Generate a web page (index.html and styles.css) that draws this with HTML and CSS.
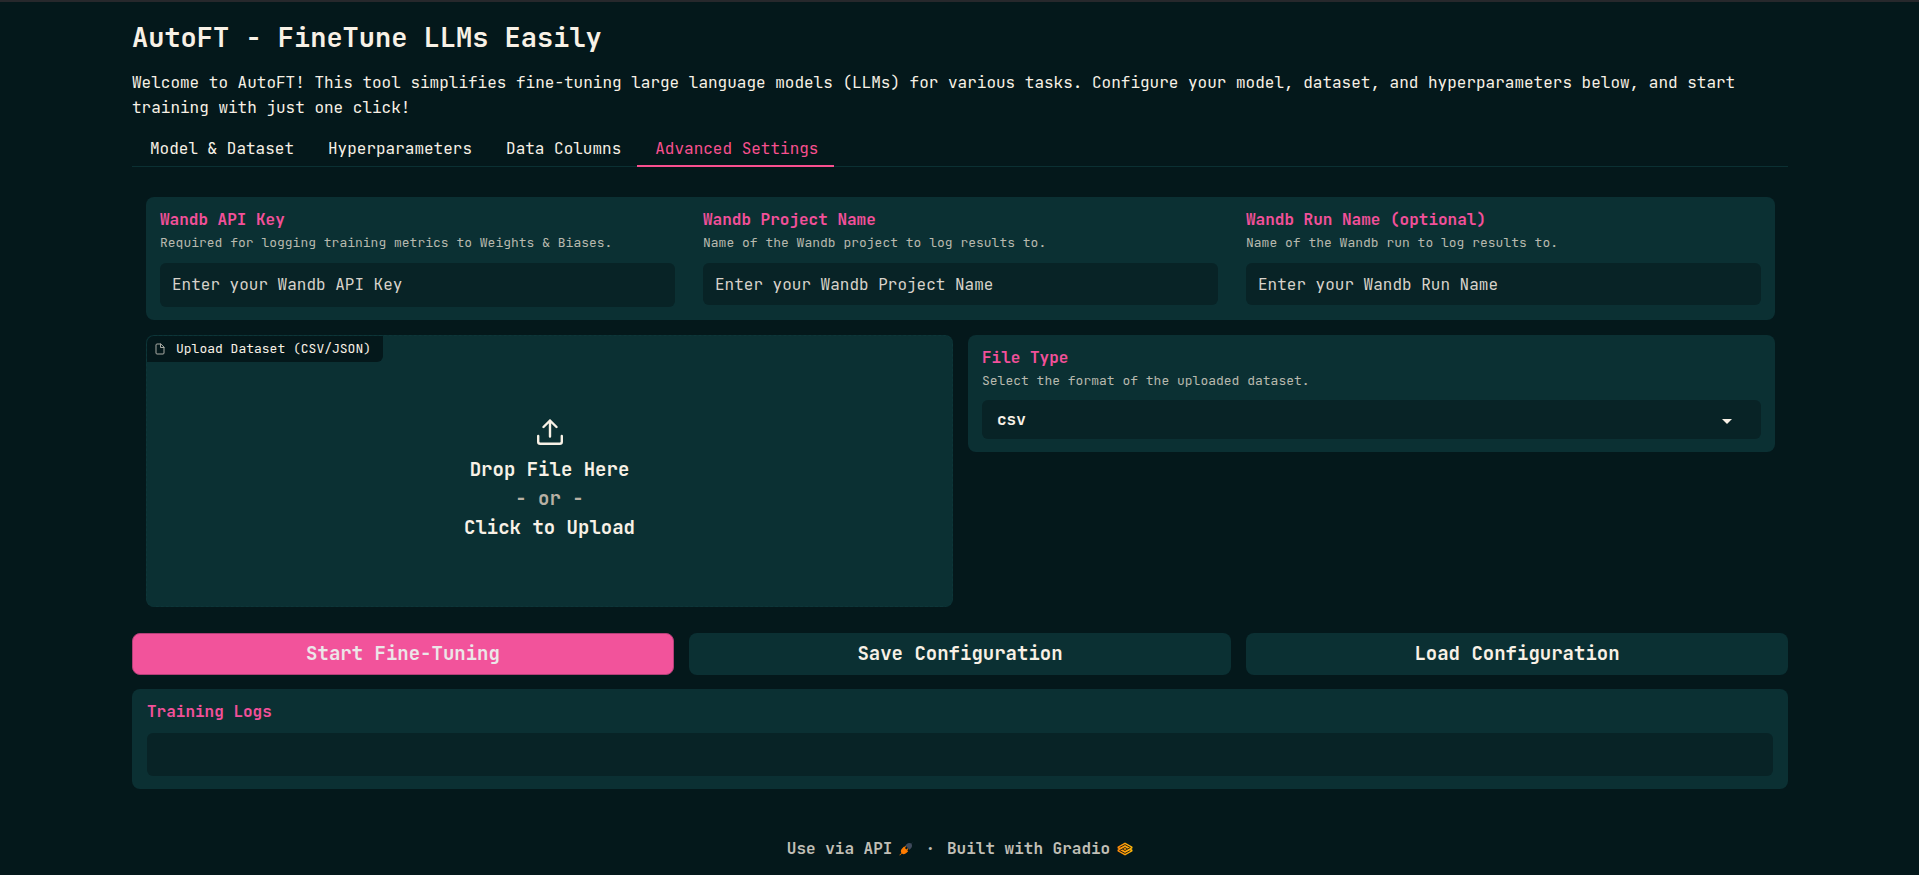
FILE: index.html
```html
<!DOCTYPE html>
<html lang="en">
<head>
<meta charset="utf-8">
<meta name="viewport" content="width=device-width, initial-scale=1">
<title>AutoFT - FineTune LLMs Easily</title>
<link rel="stylesheet" href="styles.css">
</head>
<body>
<main class="app">
  <h1 class="title">AutoFT - FineTune LLMs Easily</h1>
  <p class="intro">Welcome to AutoFT! This tool simplifies fine-tuning large language models (LLMs) for various tasks. Configure your model, dataset, and hyperparameters below, and start training with just one click!</p>

  <div class="tabs" role="tablist">
    <button class="tab" type="button" role="tab" aria-selected="false">Model &amp; Dataset</button>
    <button class="tab" type="button" role="tab" aria-selected="false">Hyperparameters</button>
    <button class="tab" type="button" role="tab" aria-selected="false">Data Columns</button>
    <button class="tab tab-active" type="button" role="tab" aria-selected="true">Advanced Settings</button>
  </div>

  <section class="tab-panel" role="tabpanel">
    <div class="block fields">
      <div class="field">
        <label class="label" for="api-key">Wandb API Key</label>
        <span class="info">Required for logging training metrics to Weights &amp; Biases.</span>
        <input class="input input-password" id="api-key" type="password" placeholder="Enter your Wandb API Key">
      </div>
      <div class="field">
        <label class="label" for="project">Wandb Project Name</label>
        <span class="info">Name of the Wandb project to log results to.</span>
        <input class="input" id="project" type="text" placeholder="Enter your Wandb Project Name">
      </div>
      <div class="field">
        <label class="label" for="run-name">Wandb Run Name (optional)</label>
        <span class="info">Name of the Wandb run to log results to.</span>
        <input class="input" id="run-name" type="text" placeholder="Enter your Wandb Run Name">
      </div>
    </div>

    <div class="columns">
      <div class="block upload">
        <div class="upload-tag">
          <svg class="file-icon" viewBox="0 0 24 24" fill="none" stroke="currentColor" stroke-width="2" stroke-linecap="round" stroke-linejoin="round" aria-hidden="true"><path d="M13 2H6a2 2 0 0 0-2 2v16a2 2 0 0 0 2 2h12a2 2 0 0 0 2-2V9z"/><path d="M13 2v7h7"/></svg>
          <span>Upload Dataset (CSV/JSON)</span>
        </div>
        <button class="drop" type="button">
          <svg class="upload-icon" viewBox="0 0 26 26" fill="none" stroke="currentColor" stroke-width="2.400" stroke-linecap="round" stroke-linejoin="round" aria-hidden="true"><path d="M13 17.500V1.500M6.500 8 13 1.500 19.500 8M1.200 17v5.800a2 2 0 0 0 2 2h19.600a2 2 0 0 0 2-2V17"/></svg>
          <span>Drop File Here</span>
          <span class="drop-or">- or -</span>
          <span>Click to Upload</span>
        </button>
      </div>
      <div class="block file-type">
        <div class="field">
          <label class="label" for="file-type">File Type</label>
          <span class="info">Select the format of the uploaded dataset.</span>
          <div class="select-wrap">
            <select class="select" id="file-type"><option>csv</option><option>json</option></select>
            <svg class="caret" viewBox="0 0 10 5" fill="currentColor" aria-hidden="true"><path d="M0 0h10L5 5z"/></svg>
          </div>
        </div>
      </div>
    </div>
  </section>

  <div class="actions">
    <button class="button button-primary" type="button">Start Fine-Tuning</button>
    <button class="button" type="button">Save Configuration</button>
    <button class="button" type="button">Load Configuration</button>
  </div>

  <section class="block logs">
    <label class="label" for="logs">Training Logs</label>
    <textarea class="logs-box" id="logs" rows="1" readonly></textarea>
  </section>

  <footer class="footer">
    <a class="footer-link" href="#api">Use via API
      <svg class="plug" viewBox="0 0 14 14" aria-hidden="true"><path d="M13.500.5 12.400 1.600C10.900.6 9 .8 7.800 2L6.300 3.500l4.200 4.200L12 6.200c1.200-1.200 1.400-3 .4-4.400L13.700.7z" fill="#3f4a5c"/><path d="M4.800 4.800 2.900 6.700C1.700 7.900 1.500 9.700 2.400 11.100L.4 13.100l.5.500 2-2c1.400.9 3.200.7 4.400-.5l1.900-1.900-1-1 1.200-1.200-.8-.8-1.200 1.200-1.500-1.500 1.200-1.200-.8-.8-1.200 1.200z" fill="#ff7c00"/></svg>
    </a>
    <span>·</span>
    <a class="footer-link" href="#gradio">Built with Gradio
      <svg class="gradio" viewBox="0 0 16 14" aria-hidden="true"><defs><linearGradient id="gr" x1="0" y1="0" x2="1" y2="0"><stop offset="0" stop-color="#ff8a0a"/><stop offset="1" stop-color="#ffb80a"/></linearGradient></defs><path d="M8 .5 15.500 4.700v1.600L14.200 7l1.300.7v1.600L8 13.500.5 9.300V7.700L1.800 7 .5 6.300V4.700z" fill="url(#gr)"/><path d="M2.600 5.500 8 2.600l5.400 2.900L10.700 7 8 5.500 5.300 7M13.400 8.500 8 11.400 2.600 8.500 5.300 7 8 8.500 10.700 7" fill="none" stroke="#2c2412" stroke-width="1"/></svg>
    </a>
  </footer>
</main>
</body>
</html>
```

FILE: styles.css
```css
* {
  box-sizing: border-box;
}

body {
  margin: 0;
  border-top: 2px solid #27282c;
  background: #04181b;
  color: #f8f1e6;
  font: 16px/24px "JetBrains Mono", "DejaVu Sans Mono", monospace;
}

button,
input,
select,
textarea {
  margin: 0;
  border: 0;
  background: none;
  color: inherit;
  font: inherit;
}

.app {
  padding: 18px 131px 0 132px;
}

.title {
  margin: 0;
  font-size: 27px;
  line-height: 34px;
}

.intro {
  margin: 16px 0 0;
  line-height: 25px;
}

.tabs {
  display: flex;
  margin-top: 10px;
  box-shadow: inset 0 -1px #0b3033;
}

.tab {
  padding: 7px 16px 4px 18px;
  border-bottom: 2px solid transparent;
}

.tab-active {
  border-color: #f8508f;
  color: #f8508f;
}

.tab-panel {
  display: flex;
  flex-direction: column;
  gap: 15px;
  padding: 30px 13px 26px 14px;
}

.block {
  border-radius: 8px;
  background: #0b3033;
}

.fields {
  display: grid;
  grid-template-columns: repeat(3, 1fr);
}

.field {
  display: flex;
  flex-direction: column;
  padding: 11px 14px 13px;
}

.label {
  color: #f2509a;
  font-weight: bold;
  line-height: 24px;
}

.info {
  color: #b8b9ae;
  font-size: 13px;
  line-height: 22px;
}

.input,
.select {
  width: 100%;
  border-radius: 6px;
  background: #082326;
}

.input {
  height: 42px;
  margin-top: 9px;
  padding: 0 12px;
}

.input-password {
  height: 44px;
  padding-bottom: 2px;
}

.input::placeholder {
  color: #d8d3cb;
  opacity: 1;
}

.columns {
  display: grid;
  grid-template-columns: 1fr 1fr;
  align-items: start;
  gap: 15px;
}

.upload {
  position: relative;
  overflow: hidden;
  border: 1px dashed #0d3639;
}

.upload-tag {
  position: absolute;
  top: 0;
  left: 0;
  display: flex;
  align-items: center;
  gap: 10px;
  padding: 2px 12px 2px 7px;
  border-bottom-right-radius: 6px;
  background: #04181b;
  font-size: 13px;
  line-height: 22px;
}

.file-icon {
  width: 12px;
  height: 12px;
  color: #a8aaa4;
}

.drop {
  display: flex;
  flex-direction: column;
  align-items: center;
  justify-content: center;
  width: 100%;
  min-height: 270px;
  padding: 18px 0 0;
  font-size: 19px;
  font-weight: bold;
  line-height: 29px;
}

.upload-icon {
  width: 26px;
  height: 26px;
  margin-bottom: 10px;
}

.drop-or {
  color: #b8b0a4;
}

.select-wrap {
  position: relative;
  margin-top: 8px;
}

.select {
  display: block;
  height: 39px;
  padding: 0 15px;
  appearance: none;
  font-weight: bold;
}

.caret {
  position: absolute;
  top: 19px;
  right: 29px;
  width: 10px;
  height: 5px;
  pointer-events: none;
}

.actions {
  display: grid;
  grid-template-columns: repeat(3, 1fr);
  gap: 15px;
}

.button {
  height: 42px;
  border-radius: 8px;
  background: #0b3033;
  font-size: 19px;
  font-weight: bold;
}

.button-primary {
  border: 1px solid #b33f78;
  background: #f2539b;
  color: #ece6e8;
}

.logs {
  display: flex;
  flex-direction: column;
  gap: 9px;
  margin-top: 14px;
  padding: 11px 15px 13px;
}

.logs-box {
  display: block;
  width: 100%;
  height: 43px;
  padding: 9px 12px;
  border-radius: 6px;
  background: #082326;
  resize: none;
}

.footer {
  display: flex;
  justify-content: center;
  gap: 12px;
  margin-top: 48px;
  color: #c0bfb6;
  font-weight: bold;
}

.footer-link {
  display: flex;
  align-items: center;
  gap: 7px;
  color: inherit;
  text-decoration: none;
}

.plug {
  width: 14px;
  height: 14px;
}

.gradio {
  width: 16px;
  height: 14px;
}
```
